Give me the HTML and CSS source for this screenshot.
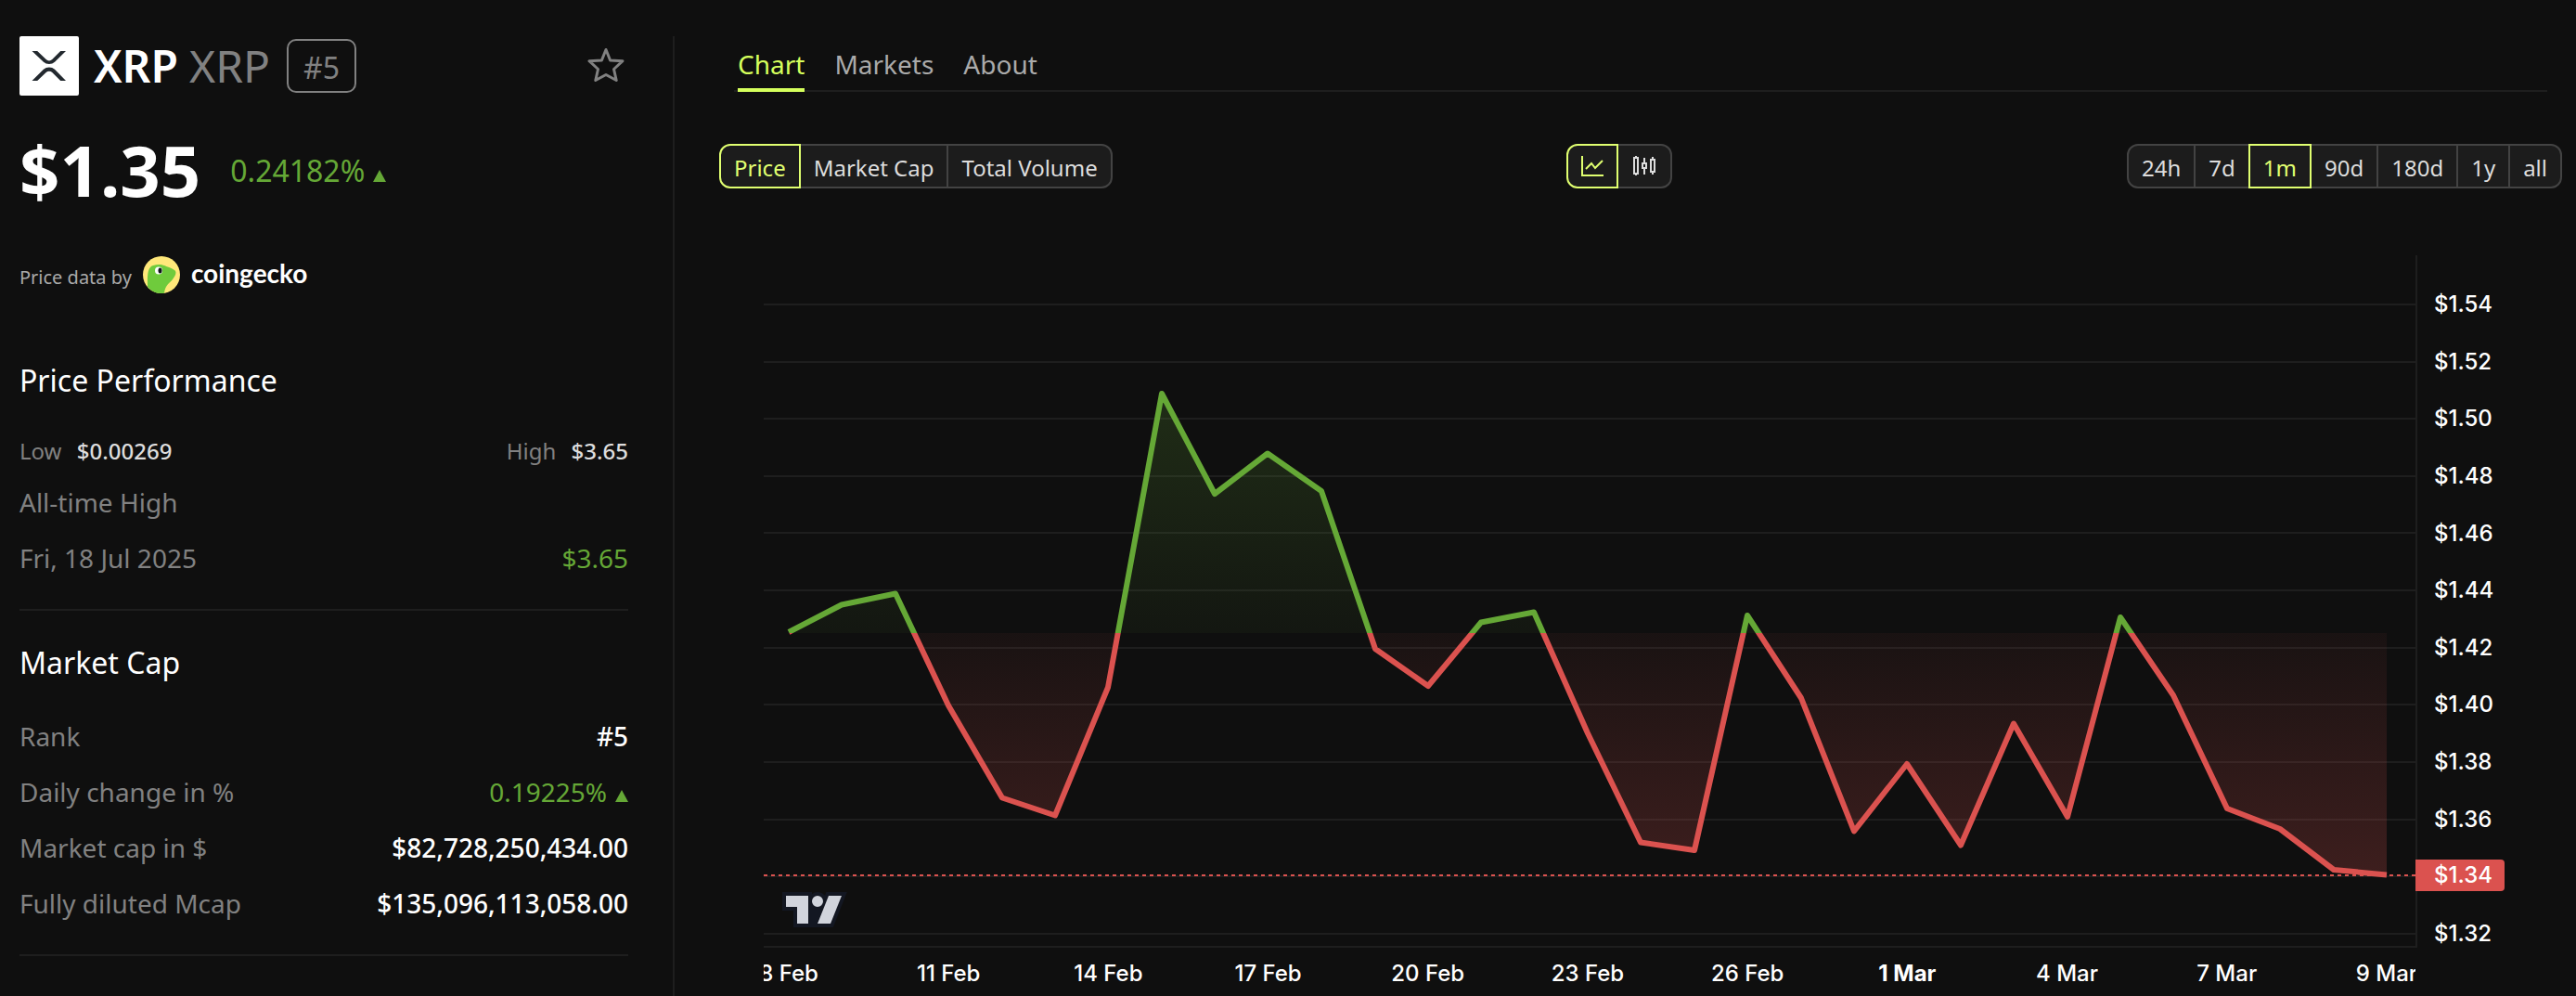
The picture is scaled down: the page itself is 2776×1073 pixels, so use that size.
FILE: index.html
```html
<!DOCTYPE html>
<html lang="en">
<head>
<meta charset="utf-8">
<meta name="viewport" content="width=device-width, initial-scale=1">
<title>XRP price</title>
<link rel="stylesheet" href="styles.css">
</head>
<body>
<div class="page">
  <aside class="summary">
    <header class="coin">
      <svg class="coin-logo" viewBox="0 0 64 64" aria-hidden="true">
        <rect width="64" height="64" rx="2" fill="#fff"/>
        <path fill="#23292f" d="M44.200 16h5.800L38 27.700a8.800 8.800 0 0 1-12.100 0L13.500 16h5.700l9.500 9.100a4.700 4.700 0 0 0 6.500 0zM19.200 48h-5.700l12.400-12.200a8.800 8.800 0 0 1 12.100 0L50 48h-5.800l-9-8.900a4.700 4.700 0 0 0-6.500 0z"/>
      </svg>
      <h1 class="coin-name">XRP</h1>
      <span class="coin-symbol">XRP</span>
      <span class="coin-rank">#5</span>
      <button class="favorite" type="button" aria-label="Add to favorites">
        <svg viewBox="0 0 40 40" width="40" height="40" aria-hidden="true"><path d="M20 2.500l4.600 11.500 13.400.7-9.500 8.800 2.700 12L20 29.500 8.800 35.500l2.700-12L2 14.700l13.400-.7z" fill="none" stroke="#818181" stroke-width="3" stroke-linejoin="round"/></svg>
      </button>
    </header>
    <div class="price-row">
      <strong class="price">$1.35</strong>
      <span class="change">0.24182%<svg class="up" viewBox="0 0 14 13" aria-hidden="true"><path d="M7 0l7 13H0z"/></svg></span>
    </div>
    <div class="source">
      <span class="source-label">Price data by</span>
      <svg class="gecko" viewBox="0 0 40 40" aria-hidden="true">
        <circle cx="20" cy="20" r="20" fill="#ffe87a"/>
        <path d="M5 33C5 24 4 12 11 10c4-1.500 9-1.500 12 0 4 1.500 8 3 11 5 3 2 1 6-2 10-3 4-8 6-9 14.800A20 20 0 0 1 5 33z" fill="#6fcb3c"/>
        <circle cx="17" cy="15.500" r="4" fill="#fff"/><ellipse cx="18.500" cy="15.500" rx="2" ry="3" fill="#0d1217"/>
      </svg>
      <a class="source-name" href="#coingecko">coingecko</a>
    </div>

    <section class="block">
      <h2>Price Performance</h2>
      <div class="range">
        <span>Low <b>$0.00269</b></span>
        <span>High <b>$3.65</b></span>
      </div>
      <dl class="facts">
        <div><dt>All-time High</dt></div>
        <div><dt>Fri, 18 Jul 2025</dt><dd class="gain">$3.65</dd></div>
      </dl>
    </section>
    <section class="block">
      <h2>Market Cap</h2>
      <dl class="facts facts-spaced">
        <div><dt>Rank</dt><dd>#5</dd></div>
        <div><dt>Daily change in %</dt><dd class="gain">0.19225%<svg class="up" viewBox="0 0 14 13" aria-hidden="true"><path d="M7 0l7 13H0z"/></svg></dd></div>
        <div><dt>Market cap in $</dt><dd>$82,728,250,434.00</dd></div>
        <div><dt>Fully diluted Mcap</dt><dd>$135,096,113,058.00</dd></div>
      </dl>
    </section>
  </aside>

  <main class="main">
    <nav class="tabs">
      <a class="active" href="#chart">Chart</a>
      <a href="#markets">Markets</a>
      <a href="#about">About</a>
    </nav>
    <div class="toolbar">
      <div class="group">
        <button class="active" type="button">Price</button>
        <button type="button">Market Cap</button>
        <button type="button">Total Volume</button>
      </div>
      <div class="group group-icons">
        <button class="active" type="button" aria-label="Line chart"><svg viewBox="0 0 24 24" width="24" height="24" aria-hidden="true"><path d="M1 1v21h23M5 15l6-6 4 5 8-8" fill="none" stroke="currentColor" stroke-width="2"/></svg></button>
        <button type="button" aria-label="Candlestick chart"><svg viewBox="0 0 28 24" width="28" height="24" aria-hidden="true"><path d="M5 1v2m0 17v2M3 3h4v17H3zM14 3v6m0 5v7M12 9h4v5h-4zM23 2v3m0 13v3M21 5h4v13h-4z" fill="none" stroke="currentColor" stroke-width="2"/></svg></button>
      </div>
      <div class="group">
        <button type="button">24h</button>
        <button type="button">7d</button>
        <button class="active" type="button">1m</button>
        <button type="button">90d</button>
        <button type="button">180d</button>
        <button type="button">1y</button>
        <button type="button">all</button>
      </div>
    </div>

    <div class="chart" id="chart">
      <div class="pane">
        <svg class="plot" viewBox="823 275 1780 744" preserveAspectRatio="none" role="img" aria-label="XRP price, 8 Feb to 9 Mar">
          <defs>
            <linearGradient id="gain-fill" gradientUnits="userSpaceOnUse" x1="0" y1="275" x2="0" y2="682"><stop offset="0" stop-color="#65a836" stop-opacity=".28"/><stop offset="1" stop-color="#65a836" stop-opacity=".05"/></linearGradient>
            <linearGradient id="loss-fill" gradientUnits="userSpaceOnUse" x1="0" y1="682" x2="0" y2="1019"><stop offset="0" stop-color="#db524f" stop-opacity=".05"/><stop offset="1" stop-color="#db524f" stop-opacity=".28"/></linearGradient>
            <clipPath id="above"><rect x="823" y="275" width="1780" height="407"/></clipPath>
            <clipPath id="below"><rect x="823" y="682" width="1780" height="337"/></clipPath>
            <path id="series" d="M850 681L907 651.500L965 639.500L1022 760L1080 859.500L1137 878.500L1194 740.500L1252 424L1309 532L1366 488.500L1424 529L1482 699L1539 739L1596 670.500L1653 659.500L1711 790L1768 907.500L1826 916L1883 663L1941 752L1998 895.500L2055 823L2113 910.500L2170 779.500L2228 880L2285 665L2342 749L2400 871L2457 893L2515 937L2572 942.500"/>
            <path id="area" d="M850 682V681L907 651.500L965 639.500L1022 760L1080 859.500L1137 878.500L1194 740.500L1252 424L1309 532L1366 488.500L1424 529L1482 699L1539 739L1596 670.500L1653 659.500L1711 790L1768 907.500L1826 916L1883 663L1941 752L1998 895.500L2055 823L2113 910.500L2170 779.500L2228 880L2285 665L2342 749L2400 871L2457 893L2515 937L2572 942.500V682z"/>
          </defs>
          <path class="grid" d="M823 328H2603M823 390H2603M823 451H2603M823 513H2603M823 574H2603M823 636H2603M823 698H2603M823 759H2603M823 821H2603M823 883H2603M823 944H2603M823 1006H2603"/>
          <use href="#area" fill="url(#gain-fill)" clip-path="url(#above)"/>
          <use href="#area" fill="url(#loss-fill)" clip-path="url(#below)"/>
          <path class="last" d="M823 943H2603"/>
          <use class="line line-gain" href="#series" clip-path="url(#above)"/>
          <use class="line line-loss" href="#series" clip-path="url(#below)"/>
        </svg>
        <svg class="tv" viewBox="0 0 35 19" aria-hidden="true">
          <path fill="#131722" d="M0 0H16V1.100a5 5 0 0 1 7 .8l.7-1.900H34.900L27.400 19H6V10H0z"/>
          <path fill="#d1d4dc" d="M14 2H2v6h6v9h6V2Zm12 15h-7l6-15h7l-6 15Zm-7-9a3 3 0 1 0 0-6 3 3 0 0 0 0 6Z"/>
        </svg>
      </div>
      <div class="price-axis">
        <span>$1.54</span><span>$1.52</span><span>$1.50</span><span>$1.48</span><span>$1.46</span><span>$1.44</span><span>$1.42</span><span>$1.40</span><span>$1.38</span><span>$1.36</span><span class="current">$1.34</span><span>$1.32</span>
      </div>
      <div class="time-axis">
        <span>8 Feb</span><span>11 Feb</span><span>14 Feb</span><span>17 Feb</span><span>20 Feb</span><span>23 Feb</span><span>26 Feb</span><span class="month">1 Mar</span><span>4 Mar</span><span>7 Mar</span><span>9 Mar</span>
      </div>
    </div>
  </main>
</div>
</body>
</html>
```
FILE: styles.css
```css
* { box-sizing: border-box; }
body {
  margin: 0;
  background: #0f0f0f;
  color: #fff;
  font-family: "Noto Sans", sans-serif;
  font-size: 28px;
}
h1, h2, dl, dd { margin: 0; }
a { color: inherit; text-decoration: none; }
button { font: inherit; color: inherit; margin: 0; cursor: pointer; }

.page { display: flex; min-height: 100vh; padding-top: 39px; }

/* Coin summary */
.summary {
  width: 706px;
  flex: none;
  margin-left: 21px;
  padding-right: 48px;
  border-right: 2px solid #1e1e1e;
}
.coin { display: flex; align-items: center; height: 64px; }
.coin-logo { width: 64px; height: 64px; margin-right: 16px; }
.coin-name, .coin-symbol { font-size: 48px; line-height: 64px; }
.coin-name { font-weight: 600; margin-right: 12px; }
.coin-symbol { color: #818181; }
.coin-rank {
  margin-left: 18px;
  height: 58px;
  padding: 4px 16px 0;
  border: 2px solid #818181;
  border-radius: 10px;
  color: #818181;
  font-size: 32px;
  line-height: 50px;
}
.favorite { display: flex; margin: 0 4px 0 auto; padding: 0; border: 0; background: none; }
.price-row { display: flex; align-items: center; gap: 32px; margin-top: 40px; }
.price { font-size: 76px; line-height: 80px; font-weight: 700; }
.change { padding-top: 2px; color: #65a836; font-size: 32px; line-height: 44px; }
.up { width: 14px; height: 13px; margin-left: 9px; fill: #65a836; }
.source {
  display: flex;
  align-items: center;
  height: 40px;
  margin-top: 53px;
  color: #aaa;
  font-size: 20px;
}
.source-label { padding-top: 4px; }
.gecko { width: 40px; height: 40px; margin: 0 12px; }
.source-name {
  padding-bottom: 4px;
  color: #fff;
  font-family: Lato, sans-serif;
  font-size: 28px;
  line-height: 36px;
  font-weight: 700;
}

.block { padding-bottom: 25px; border-bottom: 2px solid #1e1e1e; }
.source + .block { padding-top: 72px; }
.block + .block { padding-top: 34px; }
h2 { font-size: 32px; line-height: 44px; font-weight: 400; }
.range {
  display: flex;
  justify-content: space-between;
  margin: 38px 0 9px;
  color: #818181;
  font-size: 24px;
  line-height: 32px;
}
.range b { margin-left: 10px; color: #ddd; font-weight: 500; }
.facts-spaced { margin-top: 27px; }
.facts div { display: flex; justify-content: space-between; line-height: 60px; }
.facts dt { color: #818181; }
.facts dd { font-weight: 500; }
.facts .gain { color: #65a836; font-weight: 400; }

/* Chart side */
.main { flex: 1; min-width: 0; display: flex; flex-direction: column; }
.tabs {
  display: flex;
  gap: 32px;
  margin: 10px 31px 0 64px;
  padding-left: 4px;
  box-shadow: inset 0 -2px #1e1e1e;
  color: #aaa;
}
.tabs a { padding-bottom: 6px; border-bottom: 4px solid transparent; line-height: 40px; }
.tabs .active { color: #d5ff5c; border-color: #d5ff5c; }

.toolbar { display: flex; justify-content: space-between; margin: 56px 15px 0 48px; }
.group { display: flex; font-size: 24px; }
.group button {
  display: flex;
  align-items: center;
  justify-content: center;
  height: 48px;
  padding: 2px 14px 0;
  border: 2px solid #434343;
  background: #1c1c1c;
  color: #ddd;
}
.group button + button { margin-left: -2px; }
.group button:first-child { border-radius: 12px 0 0 12px; }
.group button:last-child { border-radius: 0 12px 12px 0; }
.group .active { position: relative; border-color: #e0ff70; color: #e0ff70; }
.group-icons button { padding-top: 0; }

.chart {
  flex: 1;
  min-height: 400px;
  display: grid;
  grid-template-columns: minmax(0, 1fr) 173px;
  grid-template-rows: minmax(0, 1fr) 52px;
  margin: 72px 0 0 96px;
  font-family: Inter, sans-serif;
  font-size: 24px;
  font-weight: 500;
  line-height: 24px;
}
.pane { position: relative; display: flex; border-bottom: 2px solid #1e1e1e; }
.plot { flex: 1; min-width: 0; height: 100%; }
.plot path, .plot use { vector-effect: non-scaling-stroke; }
.grid { stroke: #1e1e1e; stroke-width: 2; }
.last { stroke: #db524f; stroke-width: 2; stroke-dasharray: 4 4; }
.line { fill: none; stroke-width: 6; stroke-linejoin: round; }
.line-gain { stroke: #65a836; }
.line-loss { stroke: #db524f; }
.tv { position: absolute; left: 20px; bottom: 20px; width: 70px; height: 38px; }
.price-axis {
  display: flex;
  flex-direction: column;
  justify-content: space-between;
  align-items: flex-start;
  padding: 41px 0 3px 18px;
  border-left: 2px solid #1e1e1e;
}
.current {
  margin: -6px 0 -4px -20px;
  padding: 5px 13px 5px 20px;
  border-radius: 0 4px 4px 0;
  background: #db524f;
}
.time-axis {
  display: flex;
  justify-content: space-between;
  padding: 16px 31px 0 27px;
  overflow: hidden;
}
.time-axis span { display: flex; justify-content: center; width: 0; white-space: nowrap; }
.month { font-weight: 700; }
```
